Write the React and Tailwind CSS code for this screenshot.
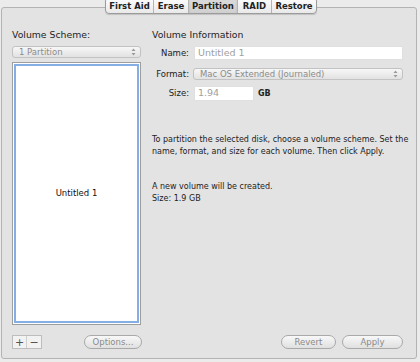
import { useState } from 'react';

const tabs = ['First Aid', 'Erase', 'Partition', 'RAID', 'Restore'];

function Stepper() {
    return (
        <svg width="5" height="8" viewBox="0 0 5 8" className="shrink-0">
            <path d="M2.5 0.5L4.5 3H0.5Z" fill="#9a9a9a" />
            <path d="M2.5 7.5L4.5 5H0.5Z" fill="#9a9a9a" />
        </svg>
    );
}

function Popup({ label, className }) {
    return (
        <div
            className={`flex items-center justify-between h-[12px] pl-[6px] pr-[4px] rounded-[3px] border border-[#c2c2c2] bg-gradient-to-b from-[#f7f7f7] to-[#e2e2e2] text-[8.5px] text-[#8c8c8c] leading-none ${className}`}
        >
            <span>{label}</span>
            <Stepper />
        </div>
    );
}

function PillButton({ label, className }) {
    return (
        <button
            className={`h-[14px] rounded-full border border-[#a9a9a9] bg-gradient-to-b from-[#f8f8f8] to-[#e0e0e0] text-[8.5px] text-[#8a8a8a] leading-none ${className}`}
        >
            {label}
        </button>
    );
}

export default function App() {
    const [active] = useState('Partition');

    return (
        <div
            className="relative w-[420px] h-[362px] bg-[#ebebeb] text-[#222] overflow-hidden"
            style={{ fontFamily: '"DejaVu Sans", "Liberation Sans", sans-serif' }}
        >
            {/* Tabs */}
            <div className="absolute left-[105px] top-[-3px] flex h-[17px] rounded-[4px] border border-[#9b9b9b] bg-gradient-to-b from-[#fdfdfd] to-[#e9e9e9] shadow-[0_1px_1px_rgba(0,0,0,0.15)] overflow-hidden z-10">
                {tabs.map((t, i) => (
                    <div
                        key={t}
                        className={`flex items-end pb-[3px] justify-center text-[8.5px] font-semibold leading-none ${
                            i > 0 ? 'border-l border-[#b4b4b4]' : ''
                        } ${
                            t === active
                                ? 'bg-gradient-to-b from-[#dcdcdc] to-[#d0d0d0] shadow-[inset_0_1px_2px_rgba(0,0,0,0.15)]'
                                : ''
                        } ${
                            t === 'First Aid'
                                ? 'w-[47px]'
                                : t === 'Erase'
                                ? 'w-[35px]'
                                : t === 'Partition'
                                ? 'w-[49px]'
                                : t === 'RAID'
                                ? 'w-[34px]'
                                : 'w-[45px]'
                        }`}
                    >
                        {t}
                    </div>
                ))}
            </div>

            {/* Panel */}
            <div className="absolute left-[1px] top-[7px] w-[416px] h-[352px] rounded-[3px] border border-[#b3b3b3] bg-[#e3e3e3] flex pt-[21px] pb-[9px] pl-[10px] pr-[13px]">
                {/* Left column */}
                <div className="w-[130px] shrink-0 flex flex-col">
                    <div className="h-[12px] text-[9.3px] leading-[12px]">Volume Scheme:</div>
                    <Popup label="1 Partition" className="mt-[5px] w-[129px]" />
                    <div className="mt-[4px] w-[129px] h-[263px] border border-[#9e9e9e] bg-white p-[1px]">
                        <div className="h-full border-2 border-[#84aee4] flex items-center justify-center text-[8.5px] text-[#111]">
                            Untitled 1
                        </div>
                    </div>
                    <div className="mt-auto flex items-center">
                        <div className="flex h-[14px] border border-[#bdbdbd] bg-[#f2f2f2]">
                            <div className="w-[14px] flex items-center justify-center text-[11px] leading-none text-[#555] border-r border-[#cfcfcf]">+</div>
                            <div className="w-[14px] flex items-center justify-center text-[11px] leading-none text-[#555]">−</div>
                        </div>
                        <PillButton label="Options..." className="ml-[42px] w-[58px]" />
                    </div>
                </div>

                {/* Right column */}
                <div className="ml-[10px] flex-1 min-w-0 flex flex-col">
                    <div className="h-[12px] text-[9.3px] leading-[12px]">Volume Information</div>
                    <div className="mt-[5px] flex items-center h-[14px]">
                        <span className="w-[37px] text-right text-[8.5px]">Name:</span>
                        <div className="ml-[5px] flex-1 h-[14px] bg-white border border-[#e0e0e0] flex items-center pl-[3px] text-[9.5px] text-[#a0a0a0]">
                            Untitled 1
                        </div>
                    </div>
                    <div className="mt-[8px] flex items-center h-[12px]">
                        <span className="w-[37px] text-right text-[8.5px]">Format:</span>
                        <Popup label="Mac OS Extended (Journaled)" className="ml-[4px] flex-1" />
                    </div>
                    <div className="mt-[6px] flex items-center h-[15px]">
                        <span className="w-[37px] text-right text-[8.5px]">Size:</span>
                        <div className="ml-[5px] w-[60px] h-[15px] bg-white border border-[#e0e0e0] flex items-center pl-[3px] text-[9.5px] text-[#a0a0a0]">
                            1.94
                        </div>
                        <span className="ml-[4px] text-[8px] font-semibold">GB</span>
                    </div>

                    <p className="mt-[33px] text-[8px] leading-[12px] whitespace-nowrap">
                        To partition the selected disk, choose a volume scheme. Set the
                        <br />
                        name, format, and size for each volume. Then click Apply.
                    </p>
                    <p className="mt-[23px] text-[8px] leading-[12px] whitespace-nowrap">
                        A new volume will be created.
                        <br />
                        Size: 1.9 GB
                    </p>

                    <div className="mt-auto flex justify-end gap-[6px]">
                        <PillButton label="Revert" className="w-[55px]" />
                        <PillButton label="Apply" className="w-[61px]" />
                    </div>
                </div>
            </div>
        </div>
    );
}
